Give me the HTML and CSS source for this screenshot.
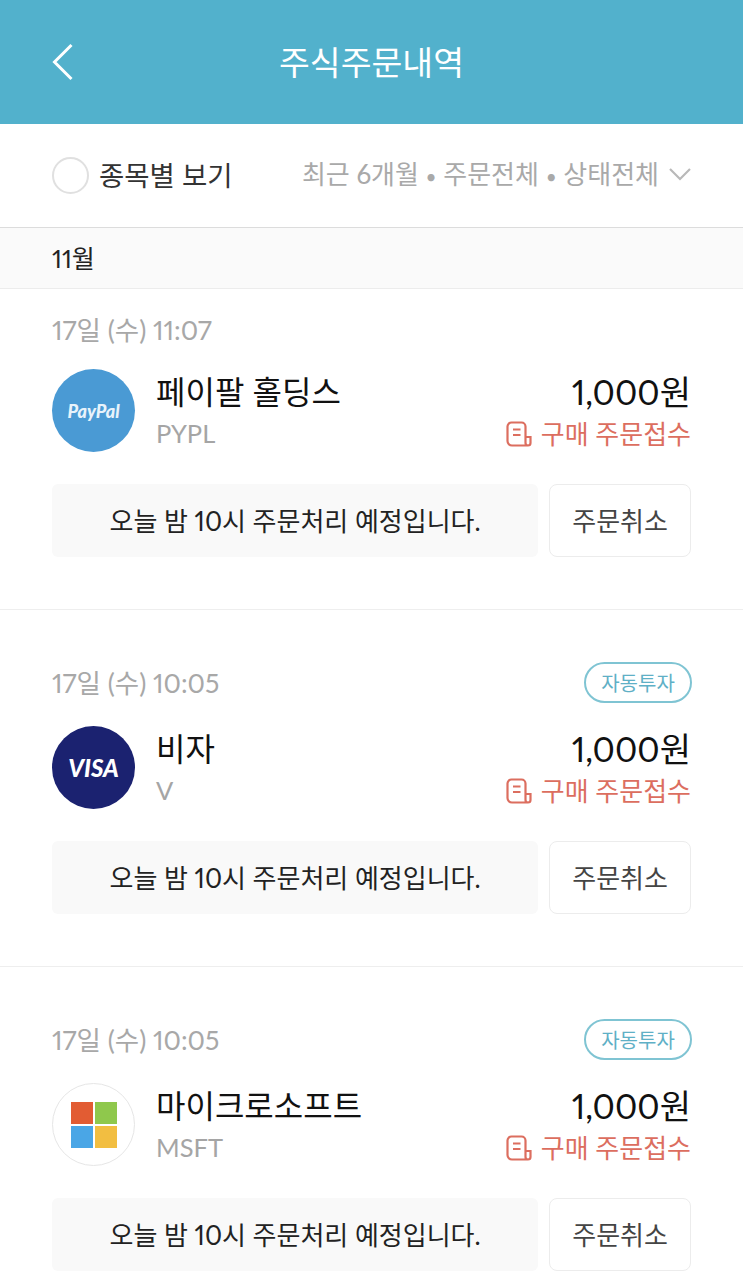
FILE: index.html
```html
<!DOCTYPE html>
<html lang="ko">
<head>
<meta charset="utf-8">
<title>주식주문내역</title>
<link rel="stylesheet" href="styles.css">
</head>
<body>
<header class="topbar">
  <svg class="back" width="24" height="38" viewBox="0 0 24 38"><path d="M20.500 2 3.500 19l17 17" fill="none" stroke="#fff" stroke-width="3"/></svg>
  <h1 class="title">주식주문내역</h1>
</header>
<section class="filter">
  <div class="by-stock"><span class="radio"></span><span class="by-label">종목별 보기</span></div>
  <div class="filter-right"><span class="filter-text">최근 6개월 <span class="dot">•</span> 주문전체 <span class="dot">•</span> 상태전체</span>
    <svg class="chevron" width="24" height="14" viewBox="0 0 24 14"><path d="M2 2l10 10L22 2" fill="none" stroke="#b9b9b9" stroke-width="2.200"/></svg>
  </div>
</section>
<div class="month">11월</div>

<article class="card card-first">
  <div class="date-row"><span class="date">17일 (수) 11:07</span></div>
  <div class="info info-first">
    <div class="logo logo-paypal">PayPal</div>
    <div class="name-col"><div class="name">페이팔 홀딩스</div><div class="ticker">PYPL</div></div>
    <div class="amount-col"><div class="amount">1,000원</div>
      <div class="status"><svg width="26" height="26" viewBox="0 0 26 26"><path d="M20.500 24.500H6A4.500 4.500 0 0 1 1.500 20V5.500A4 4 0 0 1 5.500 1.500h10a4 4 0 0 1 4 4V22a2.500 2.500 0 0 0 5 0v-6h-5M7 8.500h7.500M7 14h7.500" fill="none" stroke="#dc6e5f" stroke-width="2.200"/></svg><span>구매 주문접수</span></div></div>
  </div>
  <div class="actions"><div class="notice">오늘 밤 10시 주문처리 예정입니다.</div><button class="cancel">주문취소</button></div>
</article>

<article class="card">
  <div class="date-row"><span class="date">17일 (수) 10:05</span><span class="badge">자동투자</span></div>
  <div class="info">
    <div class="logo logo-visa">VISA</div>
    <div class="name-col"><div class="name">비자</div><div class="ticker">V</div></div>
    <div class="amount-col"><div class="amount">1,000원</div>
      <div class="status"><svg width="26" height="26" viewBox="0 0 26 26"><path d="M20.500 24.500H6A4.500 4.500 0 0 1 1.500 20V5.500A4 4 0 0 1 5.500 1.500h10a4 4 0 0 1 4 4V22a2.500 2.500 0 0 0 5 0v-6h-5M7 8.500h7.500M7 14h7.500" fill="none" stroke="#dc6e5f" stroke-width="2.200"/></svg><span>구매 주문접수</span></div></div>
  </div>
  <div class="actions"><div class="notice">오늘 밤 10시 주문처리 예정입니다.</div><button class="cancel">주문취소</button></div>
</article>

<article class="card">
  <div class="date-row"><span class="date">17일 (수) 10:05</span><span class="badge">자동투자</span></div>
  <div class="info">
    <div class="logo logo-ms"><span class="ms-r"></span><span class="ms-g"></span><span class="ms-b"></span><span class="ms-y"></span></div>
    <div class="name-col"><div class="name">마이크로소프트</div><div class="ticker">MSFT</div></div>
    <div class="amount-col"><div class="amount">1,000원</div>
      <div class="status"><svg width="26" height="26" viewBox="0 0 26 26"><path d="M20.500 24.500H6A4.500 4.500 0 0 1 1.500 20V5.500A4 4 0 0 1 5.500 1.500h10a4 4 0 0 1 4 4V22a2.500 2.500 0 0 0 5 0v-6h-5M7 8.500h7.500M7 14h7.500" fill="none" stroke="#dc6e5f" stroke-width="2.200"/></svg><span>구매 주문접수</span></div></div>
  </div>
  <div class="actions"><div class="notice">오늘 밤 10시 주문처리 예정입니다.</div><button class="cancel">주문취소</button></div>
</article>
</body>
</html>
```
FILE: styles.css
```css
* { box-sizing: border-box; }
html, body { margin: 0; padding: 0; }
body { width: 743px; height: 1279px; overflow: hidden; background: #fff; font-family: Lato, "Noto Sans CJK KR", sans-serif; font-variant-numeric: proportional-nums; color: #111; }
.topbar { height: 124px; background: #52b1cc; display: flex; align-items: center; justify-content: center; position: relative; }
.back { position: absolute; left: 51px; top: 43px; }
.title { margin: 0; font-size: 33.500px; font-weight: 400; color: #fff; line-height: 40px; }
.filter { height: 104px; display: flex; align-items: center; justify-content: space-between; padding: 0 51px 0 52px; border-bottom: 1px solid #dcdcdc; }
.by-stock { display: flex; align-items: center; gap: 10px; }
.radio { width: 37px; height: 37px; border-radius: 50%; border: 2px solid #e0e0e0; }
.by-label { font-size: 27.500px; color: #333; line-height: 34px; }
.filter-right { display: flex; align-items: center; gap: 9px; }
.filter-text { font-size: 26px; color: #a9a9a9; line-height: 34px; }
.chevron { margin-bottom: 3px; }
.dot { font-size: 19px; }
.month { height: 61px; padding: 0 0 3px 52px; display: flex; align-items: center; background: #fafafa; border-bottom: 1px solid #ececec; font-size: 25px; color: #222; }
.card { padding: 52px; border-bottom: 1px solid #eeeeee; }
.card-first { padding-top: 20px; }
.date-row { height: 41px; display: flex; align-items: center; justify-content: space-between; }
.date { font-size: 26.500px; line-height: 36px; color: #a8a8a8; }
.badge { width: 108px; height: 41px; margin-right: -1px; border: 2px solid #7fc4d3; border-radius: 21px; display: flex; align-items: center; justify-content: center; font-size: 20px; color: #5fb0c6; }
.info { height: 83px; display: flex; align-items: center; margin-top: 23px; gap: 21px; }
.info-first { margin-top: 19px; }
.logo { width: 83px; height: 83px; border-radius: 50%; flex: none; display: flex; align-items: center; justify-content: center; }
.logo-paypal { background: #4a9ad4; color: #e8f3fb; font-size: 18px; font-weight: 900; font-style: italic; }
.logo-visa { background: #1b2270; color: #fff; font-size: 24px; font-weight: 900; font-style: italic; }
.logo-ms { border: 1px solid #e6e6e6; display: grid; grid-template-columns: 22px 22px; grid-auto-rows: 22px; gap: 2px; align-content: center; justify-content: center; align-items: stretch; }
.ms-r { background: #e25c33; }
.ms-g { background: #8fc84c; }
.ms-b { background: #4aa6e6; }
.ms-y { background: #f2be41; }
.name-col { flex: 1; padding-top: 2px; }
.name { font-size: 32px; line-height: 42px; color: #111; }
.ticker { font-size: 25.500px; line-height: 40px; color: #a5a5a5; }
.amount-col { display: flex; flex-direction: column; align-items: flex-end; padding-top: 4px; }
.amount { font-size: 34px; line-height: 42px; color: #111; }
.status { display: flex; align-items: center; gap: 9px; font-size: 26px; line-height: 42px; color: #dc6e5f; }
.actions { display: flex; gap: 11px; margin-top: 32px; }
.notice { width: 487px; height: 73px; padding-bottom: 2px; background: #f9f9f9; border-radius: 6px; display: flex; align-items: center; justify-content: center; font-size: 26px; color: #222; }
.cancel { width: 142px; height: 73px; padding: 0 0 2px; background: #fff; border: 1px solid #ececec; border-radius: 8px; font: inherit; font-size: 26px; color: #444; }
```
